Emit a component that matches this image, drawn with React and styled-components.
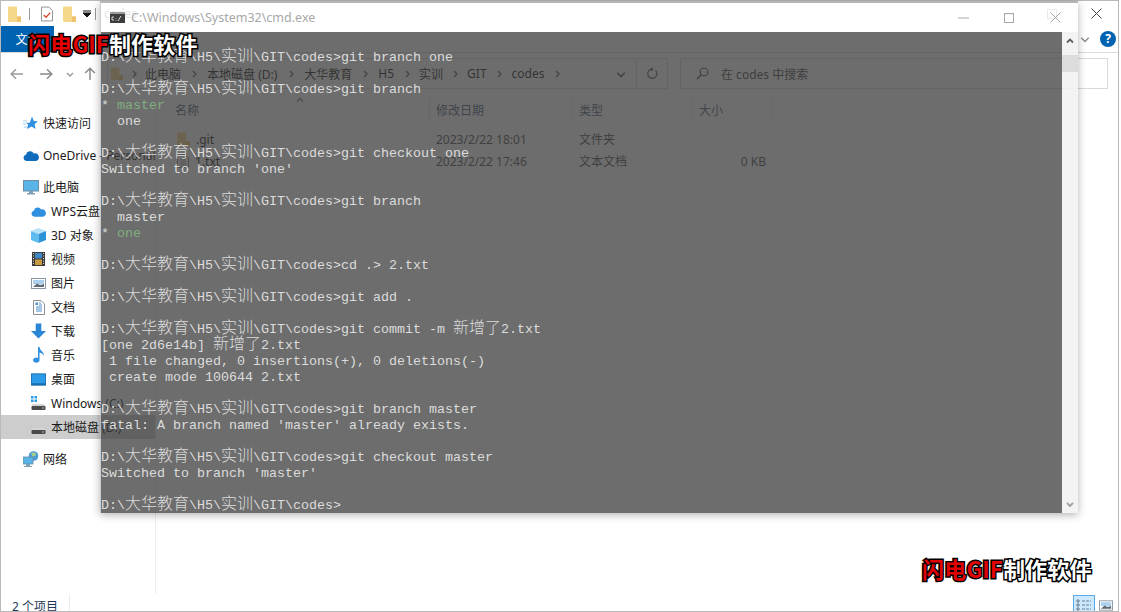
import React from 'react';
import styled, { createGlobalStyle } from 'styled-components';

const GlobalStyle = createGlobalStyle`
  html, body {
    margin: 0;
    padding: 0;
    background: #fff;
    overflow: hidden;
  }
`;

const uiFont = `"Noto Sans", "Noto Sans CJK SC", sans-serif`;

const Desktop = styled.div`
  position: relative;
  width: 1121px;
  height: 612px;
  overflow: hidden;
  background: #fff;
  font-family: ${uiFont};
  font-size: 12px;
  color: #1a1a1a;
`;

const Explorer = styled.div`
  box-sizing: border-box;
  width: 1119px;
  height: 612px;
  display: flex;
  flex-direction: column;
  border: 1px solid #b9b9b9;
`;

const QuickBar = styled.div`
  height: 25px;
  flex: none;
  display: flex;
  align-items: center;
  padding-left: 7px;
`;

const QuickSlot = styled.span`
  width: ${p => p.$w}px;
  height: 18px;
  flex: none;
  display: flex;
  align-items: center;
  justify-content: ${p => p.$align || 'flex-start'};
`;

const QuickDivider = styled.span`
  width: 1px;
  height: 12px;
  background: #999;
`;

const WindowTitle = styled.span`
  margin-left: 8px;
  font-size: 12px;
`;

const Captions = styled.div`
  margin-left: auto;
  display: flex;
  align-self: stretch;
`;

const CaptionButton = styled.div`
  width: ${p => p.$w || 44}px;
  display: flex;
  align-items: center;
  justify-content: center;
`;

const RibbonTabs = styled.div`
  height: 27px;
  flex: none;
  box-sizing: border-box;
  display: flex;
  align-items: center;
  border-bottom: 1px solid #dadada;
`;

const FileTab = styled.div`
  width: 53px;
  height: 26px;
  background: #0063b1;
  color: #fff;
  display: flex;
  align-items: center;
  justify-content: center;
  font-size: 12px;
`;

const RibbonRight = styled.div`
  margin-left: auto;
  display: flex;
  align-items: center;
  gap: 10px;
  padding-right: 2px;
`;

const HelpBadge = styled.span`
  width: 16px;
  height: 16px;
  border-radius: 50%;
  background: #0063b1;
  color: #fff;
  font-weight: 700;
  font-size: 12px;
  line-height: 16px;
  text-align: center;
`;

const NavRow = styled.div`
  height: 44px;
  flex: none;
  display: flex;
  align-items: flex-start;
  padding-top: 5px;
  box-sizing: border-box;
`;

const NavButtons = styled.div`
  width: 106px;
  height: 31px;
  flex: none;
  display: flex;
  align-items: center;
  padding-left: 2px;
  box-sizing: border-box;
`;

const NavGlyph = styled.span`
  width: ${p => p.$w}px;
  flex: none;
  display: flex;
  justify-content: center;
`;

const AddressBox = styled.div`
  width: 561px;
  height: 31px;
  flex: none;
  box-sizing: border-box;
  display: flex;
  align-items: center;
  border: 1px solid #d9d9d9;
  padding-left: 3px;
`;

const Crumb = styled.span`
  white-space: nowrap;
  font-size: 12px;
`;

const CrumbArrow = styled.span`
  width: ${p => p.$w || 26}px;
  display: flex;
  justify-content: center;
`;

const AddressEnd = styled.div`
  margin-left: auto;
  display: flex;
  align-items: center;
  height: 100%;
`;

const DropSlot = styled.div`
  width: 30px;
  display: flex;
  justify-content: center;
`;

const RefreshSlot = styled.div`
  width: 30px;
  height: 100%;
  border-left: 1px solid #d9d9d9;
  display: flex;
  align-items: center;
  justify-content: center;
`;

const SearchBox = styled.div`
  width: 428px;
  height: 31px;
  margin-left: 12px;
  box-sizing: border-box;
  border: 1px solid #d9d9d9;
  display: flex;
  align-items: center;
  padding-left: 15px;
  gap: 12px;
  color: #444;
`;

const Main = styled.div`
  flex: 1;
  min-height: 0;
  display: flex;
`;

const Sidebar = styled.nav`
  width: 154px;
  flex: none;
  padding-top: 14px;
  border-right: 1px solid #ededed;
  margin-right: 1px;
`;

const NavGroup = styled.div`
  margin-bottom: 8px;
`;

const NavItem = styled.div`
  height: 24px;
  display: flex;
  align-items: center;
  gap: ${p => (p.$child ? 5 : 4)}px;
  padding-left: ${p => (p.$child ? 30 : 21)}px;
  white-space: nowrap;
  background: ${p => (p.$selected ? '#cdcdcd' : 'transparent')};
`;

const NavIcon = styled.span`
  width: ${p => (p.$child ? 15 : 17)}px;
  flex: none;
  display: flex;
  justify-content: center;
`;

const ListPane = styled.div`
  flex: 1;
  min-width: 0;
`;

const ListGrid = styled.div`
  display: grid;
  grid-template-columns: 273px 143px 120px 80px;
`;

const HeaderCell = styled.div`
  height: 26px;
  box-sizing: border-box;
  display: flex;
  align-items: center;
  padding-left: ${p => p.$pad || 6}px;
  border-right: 1px solid #e5e5e5;
  color: #4c607a;
  position: relative;
`;

const SortArrow = styled.span`
  position: absolute;
  left: 139px;
  top: -1px;
  display: flex;
`;

const FileRows = styled.div`
  margin-top: 5px;
`;

const FileCell = styled.div`
  height: 22px;
  display: flex;
  align-items: center;
  padding-left: ${p => p.$pad || 6}px;
  justify-content: ${p => (p.$right ? 'flex-end' : 'flex-start')};
  padding-right: ${p => (p.$right ? 7 : 0)}px;
  gap: 6px;
  color: ${p => (p.$muted ? '#4a4a4a' : '#1a1a1a')};
`;

const StatusBar = styled.div`
  height: 17px;
  flex: none;
  display: flex;
  align-items: flex-start;
  line-height: 25px;
  padding-left: 11px;
  overflow: hidden;
`;

const StatusCount = styled.span`
  width: 57px;
  border-right: 1px solid #ededed;
  color: #1f3a5a;
`;

const ViewButtons = styled.div`
  margin-left: auto;
  margin-right: 5px;
  display: flex;
  align-items: flex-start;
  gap: 3px;
`;

const ViewButton = styled.span`
  width: ${p => (p.$active ? 22 : 15)}px;
  height: 17px;
  box-sizing: border-box;
  margin-top: 1px;
  display: flex;
  justify-content: center;
  padding-top: ${p => (p.$active ? 3 : 5)}px;
  border: ${p => (p.$active ? '1px solid #5aa9e6' : 'none')};
  border-bottom: none;
  background: ${p => (p.$active ? '#cce8ff' : 'transparent')};
`;

/* the cmd window floats over the explorer window, half see-through */
const CmdWindow = styled.div`
  position: absolute;
  left: 100px;
  top: 1px;
  width: 978px;
  height: 512px;
  box-sizing: border-box;
  display: flex;
  flex-direction: column;
  border-top: 2px solid rgba(170, 170, 170, 0.85);
  border-left: 1px solid rgba(170, 170, 170, 0.6);
  box-shadow: 0 2px 8px rgba(0, 0, 0, 0.3);
`;

const CmdTitleBar = styled.div`
  height: 29px;
  flex: none;
  display: flex;
  align-items: center;
  padding-left: 9px;
  background: rgba(255, 255, 255, 0.88);
  color: #a8a8a8;
  font-size: 12.5px;
`;

const CmdTitle = styled.span`
  margin-left: 6px;
`;

const CmdBody = styled.div`
  flex: 1;
  min-height: 0;
  display: flex;
`;

const Console = styled.div`
  flex: 1;
  min-width: 0;
  padding-top: 18px;
  box-sizing: border-box;
  overflow: hidden;
  background: rgba(60, 60, 60, 0.75);
  color: #dcdcdc;
  font-family: "Liberation Mono", monospace;
  font-size: 13.333px;
`;

const ConsoleLine = styled.div`
  height: 16px;
  line-height: 16px;
  white-space: pre;
`;

const Cjk = styled.span`
  font-family: "Noto Sans CJK SC", sans-serif;
  font-size: 16px;
  font-weight: 300;
  line-height: 0;
`;

const Green = styled.span`
  color: #7fae7f;
`;

const ScrollBar = styled.div`
  width: 16px;
  flex: none;
  display: flex;
  flex-direction: column;
  background: rgba(241, 241, 241, 0.88);
`;

const ScrollArrow = styled.div`
  height: 18px;
  margin-top: ${p => (p.$end ? 'auto' : '0')};
  display: flex;
  align-items: center;
  justify-content: center;
`;

const ScrollThumb = styled.div`
  height: 17px;
  margin-top: 5px;
  background: #dcdcdc;
`;

const Watermark = styled.div`
  position: absolute;
  left: ${p => p.$x}px;
  top: ${p => p.$y}px;
  font-family: "Noto Sans CJK SC", sans-serif;
  font-weight: 700;
  font-size: 22px;
  line-height: 26px;
  letter-spacing: 0.2px;
  white-space: nowrap;
  color: #fff;
  -webkit-text-stroke: 3px #000;
  paint-order: stroke fill;
`;

const WatermarkRed = styled.span`
  color: #e30000;
`;

const Folder = ({ w = 13, h = 14, c = '#f6d88a' }) => (
  <svg width={w} height={h} viewBox="0 0 13 14" preserveAspectRatio="none">
    <path d="M0 1.5 A1 1 0 0 1 1 .5 H9 V14 H1 A1 1 0 0 1 0 13 Z" fill={c} />
    <path d="M9 9 H13 V14 H9 Z" fill="#eec26a" />
  </svg>
);

const DocCheck = () => (
  <svg width="12" height="16" viewBox="0 0 13 16">
    <path d="M.5 .5 H8.5 L12.5 4.5 V15.5 H.5 Z" fill="#fff" stroke="#8a8a8a" />
    <path d="M3 9 L5.5 11.5 L10 6.5" fill="none" stroke="#d8452b" strokeWidth="1.4" />
  </svg>
);

const Chevron = ({ dir = 'right', c = '#777', size = 8, sw = 1.4 }) => {
  const d = {
    right: 'M3 1 L6 4 L3 7',
    down: 'M1 3 L4 6 L7 3',
    up: 'M1 5.5 L4 2.5 L7 5.5',
  }[dir];
  return (
    <svg width={size} height={size} viewBox="0 0 8 8">
      <path d={d} fill="none" stroke={c} strokeWidth={sw} />
    </svg>
  );
};

const ArrowLeft = ({ c }) => (
  <svg width="14" height="12" viewBox="0 0 14 12">
    <path d="M13 6 H1.5 M6 1.2 L1.2 6 L6 10.8" fill="none" stroke={c} strokeWidth="1.5" />
  </svg>
);

const ArrowRight = ({ c }) => (
  <svg width="14" height="12" viewBox="0 0 14 12">
    <path d="M1 6 H12.5 M8 1.2 L12.8 6 L8 10.8" fill="none" stroke={c} strokeWidth="1.5" />
  </svg>
);

const ArrowUp = ({ c }) => (
  <svg width="12" height="14" viewBox="0 0 12 14">
    <path d="M6 13 V1.5 M1.2 6 L6 1.2 L10.8 6" fill="none" stroke={c} strokeWidth="1.5" />
  </svg>
);

const Refresh = () => (
  <svg width="12" height="13" viewBox="0 0 12 13">
    <path d="M9.5 3.4 A4.6 4.6 0 1 1 5.5 2.2" fill="none" stroke="#555" strokeWidth="1.2" />
    <path d="M5 .2 L7.6 2.3 L5 4.2 Z" fill="#555" />
  </svg>
);

const SearchGlass = () => (
  <svg width="13" height="13" viewBox="0 0 13 13">
    <circle cx="8" cy="5" r="3.8" fill="none" stroke="#444" strokeWidth="1.1" />
    <path d="M5.2 7.8 L1 12" stroke="#444" strokeWidth="1.3" />
  </svg>
);

const Star = () => (
  <svg width="15" height="14" viewBox="0 0 15 14">
    <path d="M9 .5 L10.8 5 L14.8 5.3 L11.6 8.2 L12.6 13 L8.6 10.5 L4 13 L5.2 8.5 L3 6.8 H6.8 Z" fill="#2f8fe0" />
    <path d="M0 5 H4 M0 8 H3 M1 11 H4" stroke="#9cc9ee" strokeWidth="1" />
  </svg>
);

const Cloud = ({ c = '#0f6cbd', w = 16 }) => (
  <svg width={w} height="11" viewBox="0 0 16 11">
    <path d="M3.4 11 A3.2 3.2 0 0 1 3 4.7 A4.2 4.2 0 0 1 10.8 3.4 A3.6 3.6 0 0 1 13 11 Z" fill={c} />
  </svg>
);

const Monitor = () => (
  <svg width="16" height="15" viewBox="0 0 16 15">
    <rect x=".5" y=".5" width="15" height="10.5" fill="#59b4e8" stroke="#6d8ca3" />
    <path d="M6 11 H10 V13 H12 V14.5 H4 V13 H6 Z" fill="#7f9fb5" />
  </svg>
);

const Cube = () => (
  <svg width="15" height="15" viewBox="0 0 15 15">
    <path d="M7.5 0 L15 3 L7.5 6 L0 3 Z" fill="#b7e2fa" />
    <path d="M0 3 L7.5 6 V15 L0 12 Z" fill="#5fbcef" />
    <path d="M15 3 L7.5 6 V15 L15 12 Z" fill="#2b93d8" />
  </svg>
);

const Film = () => (
  <svg width="13" height="14" viewBox="0 0 13 14">
    <rect width="13" height="14" fill="#3a3a3a" />
    <rect x="3" y="1" width="7" height="5.5" fill="#3f86c4" />
    <rect x="3" y="7.5" width="7" height="5.5" fill="#c79a3d" />
    <path d="M1 1.5 H2 M1 4 H2 M1 6.5 H2 M1 9 H2 M1 11.5 H2 M11 1.5 H12 M11 4 H12 M11 6.5 H12 M11 9 H12 M11 11.5 H12" stroke="#ddd" />
  </svg>
);

const Picture = ({ w = 15, h = 11 }) => (
  <svg width={w} height={h} viewBox="0 0 15 11">
    <rect x=".5" y=".5" width="14" height="10" fill="#fff" stroke="#8b98a3" />
    <rect x="2" y="2" width="11" height="4" fill="#a9d0ee" />
    <path d="M2 9 L6 5.5 L9 7 L13 6 V9 Z" fill="#5e6b76" />
  </svg>
);

const DocLines = () => (
  <svg width="12" height="15" viewBox="0 0 12 15">
    <path d="M.5 .5 H8 L11.5 4 V14.5 H.5 Z" fill="#fff" stroke="#8f8f8f" />
    <path d="M6 3 H8 M6 5 H9 M3 7 H9 M3 9 H9 M3 11 H9" stroke="#4f8fc8" />
    <rect x="2.5" y="2.5" width="2.5" height="2.5" fill="#4f8fc8" />
  </svg>
);

const Download = () => (
  <svg width="16" height="16" viewBox="0 0 16 16">
    <path d="M5 0 H11 V8 H16 L8 16 L0 8 H5 Z" fill="#2c86d6" />
  </svg>
);

const Music = () => (
  <svg width="12" height="16" viewBox="0 0 12 16">
    <path d="M5 0 H6.5 C7 4 11.5 4.5 10.5 9 C10 6.5 8 6 6.5 5.5 V13 A3.2 2.6 0 1 1 5 11 Z" fill="#2f8fe0" />
  </svg>
);

const DesktopIcon = () => (
  <svg width="16" height="13" viewBox="0 0 16 13">
    <rect x=".5" y=".5" width="15" height="12" fill="#2b9be8" stroke="#1a6fae" />
    <rect x="1" y="10.5" width="14" height="2" fill="#1a6fae" />
  </svg>
);

const Drive = ({ win }) => (
  <svg width="15" height="14" viewBox="0 0 15 14">
    {win && <path d="M0 0 H2.5 V2.5 H0 Z M3.5 0 H6 V2.5 H3.5 Z M0 3.5 H2.5 V6 H0 Z M3.5 3.5 H6 V6 H3.5 Z" fill="#2b9be8" />}
    <path d="M2 8 H13 L14.5 10 H.5 Z" fill="#d5d5d5" />
    <rect x=".5" y="10" width="14" height="4" rx="1" fill="#4a4a4a" />
    <rect x="11" y="11.5" width="2" height="1" fill="#bbb" />
  </svg>
);

const Globe = () => (
  <svg width="16" height="16" viewBox="0 0 16 16">
    <circle cx="10.5" cy="5" r="4.8" fill="#4a9bd8" />
    <path d="M8 2 L12 1.5 L13 4 L10 6 Z" fill="#a9cf7f" />
    <rect x="0" y="6" width="10" height="7" fill="#59b4e8" stroke="#6d8ca3" strokeWidth=".8" />
    <path d="M3 13 H7 V15 H9 V16 H1 V15 H3 Z" fill="#7f9fb5" />
  </svg>
);

const TxtIcon = () => (
  <svg width="12" height="14" viewBox="0 0 12 14">
    <path d="M.5 .5 H8 L11.5 4 V13.5 H.5 Z" fill="#fff" stroke="#8f8f8f" />
    <path d="M3 5 H9 M3 7 H9 M3 9 H9 M3 11 H9" stroke="#9a9a9a" />
  </svg>
);

const CaptionMin = ({ c }) => (
  <svg width="11" height="2" viewBox="0 0 11 2"><path d="M0 1 H11" stroke={c} /></svg>
);

const CaptionMax = ({ c }) => (
  <svg width="10" height="10" viewBox="0 0 10 10"><rect x=".5" y=".5" width="9" height="9" fill="none" stroke={c} /></svg>
);

const CaptionClose = ({ c }) => (
  <svg width="11" height="11" viewBox="0 0 11 11"><path d="M.5 .5 L10.5 10.5 M10.5 .5 L.5 10.5" stroke={c} /></svg>
);

const ListViewIcon = () => (
  <svg width="16" height="13" viewBox="0 0 16 13">
    <path d="M1 1 H3 V3 H1 Z M1 5 H3 V7 H1 Z M1 9 H3 V11 H1 Z" fill="none" stroke="#6b7f8f" />
    <path d="M6 2 H15 M6 6 H15 M6 10 H15" stroke="#6b7f8f" strokeDasharray="3 1" />
  </svg>
);

const navGroups = [
  [{ label: '快速访问', icon: <Star /> }],
  [{ label: 'OneDrive - Personal', icon: <Cloud /> }],
  [
    { label: '此电脑', icon: <Monitor /> },
    { label: 'WPS云盘', icon: <Cloud c="#2f8fe0" w={15} />, child: true },
    { label: '3D 对象', icon: <Cube />, child: true },
    { label: '视频', icon: <Film />, child: true },
    { label: '图片', icon: <Picture />, child: true },
    { label: '文档', icon: <DocLines />, child: true },
    { label: '下载', icon: <Download />, child: true },
    { label: '音乐', icon: <Music />, child: true },
    { label: '桌面', icon: <DesktopIcon />, child: true },
    { label: 'Windows (C:)', icon: <Drive win />, child: true },
    { label: '本地磁盘 (D:)', icon: <Drive />, child: true, selected: true },
  ],
  [{ label: '网络', icon: <Globe /> }],
];

const crumbs = [
  ['此电脑', 26],
  ['本地磁盘 (D:)', 27],
  ['大华教育', 26],
  ['H5', 25],
  ['实训', 24],
  ['GIT', 25],
  ['codes', 24],
];

const prompt = 'D:\\大华教育\\H5\\实训\\GIT\\codes>';

const consoleLines = [
  prompt + 'git branch one',
  '',
  prompt + 'git branch',
  { star: 'master' },
  '  one',
  '',
  prompt + 'git checkout one',
  "Switched to branch 'one'",
  '',
  prompt + 'git branch',
  '  master',
  { star: 'one' },
  '',
  prompt + 'cd .> 2.txt',
  '',
  prompt + 'git add .',
  '',
  prompt + 'git commit -m 新增了2.txt',
  '[one 2d6e14b] 新增了2.txt',
  ' 1 file changed, 0 insertions(+), 0 deletions(-)',
  ' create mode 100644 2.txt',
  '',
  prompt + 'git branch master',
  "fatal: A branch named 'master' already exists.",
  '',
  prompt + 'git checkout master',
  "Switched to branch 'master'",
  '',
  prompt,
];

// chinese runs need a 16px glyph so they take two console cells
function renderConsoleText(text) {
  return text.split(/([\u4e00-\u9fff]+)/).map((part, i) =>
    i % 2 ? <Cjk key={i}>{part}</Cjk> : part
  );
}

function WatermarkLabel({ x, y }) {
  return (
    <Watermark $x={x} $y={y}>
      <WatermarkRed>闪电GIF</WatermarkRed>制作软件
    </Watermark>
  );
}

function CmdOverlay() {
  return (
    <CmdWindow>
      <CmdTitleBar>
        <svg width="15" height="11" viewBox="0 0 15 11">
          <rect width="15" height="11" fill="#3d3d3d" />
          <rect y="0" width="15" height="2" fill="#9a9a9a" />
          <path d="M2 5 H4 M2 8 H4 M2 5 V8 M6 6 V6.6 M6 8 V8.6 M8 9 L11 4" stroke="#fff" strokeWidth=".8" />
        </svg>
        <CmdTitle>C:\Windows\System32\cmd.exe</CmdTitle>
        <Captions>
          <CaptionButton $w={46}><CaptionMin c="#a8a8a8" /></CaptionButton>
          <CaptionButton $w={46}><CaptionMax c="#a8a8a8" /></CaptionButton>
          <CaptionButton $w={46}><CaptionClose c="#a8a8a8" /></CaptionButton>
        </Captions>
      </CmdTitleBar>
      <CmdBody>
        <Console>
          {consoleLines.map((line, i) =>
            typeof line === 'string' ? (
              <ConsoleLine key={i}>{renderConsoleText(line)}</ConsoleLine>
            ) : (
              <ConsoleLine key={i}>* <Green>{line.star}</Green></ConsoleLine>
            )
          )}
        </Console>
        <ScrollBar>
          <ScrollArrow><Chevron dir="up" c="#606060" sw={1.8} /></ScrollArrow>
          <ScrollThumb />
          <ScrollArrow $end><Chevron dir="down" c="#a0a0a0" sw={1.8} /></ScrollArrow>
        </ScrollBar>
      </CmdBody>
    </CmdWindow>
  );
}

function ExplorerWindow() {
  return (
    <Explorer>
      <QuickBar>
        <QuickSlot $w={21}><Folder h={16} /></QuickSlot>
        <QuickSlot $w={12}><QuickDivider /></QuickSlot>
        <QuickSlot $w={22}><DocCheck /></QuickSlot>
        <QuickSlot $w={20}><Folder h={16} /></QuickSlot>
        <QuickSlot $w={12}>
          <svg width="8" height="8" viewBox="0 0 8 8">
            <path d="M0 1 H8 M0 3 H8 L4 7 L0 3" stroke="#111" fill="#111" />
          </svg>
        </QuickSlot>
        <QuickDivider />
        <WindowTitle>codes</WindowTitle>
        <Captions>
          <CaptionButton><CaptionMin c="#555" /></CaptionButton>
          <CaptionButton><CaptionMax c="#555" /></CaptionButton>
          <CaptionButton><CaptionClose c="#444" /></CaptionButton>
        </Captions>
      </QuickBar>
      <RibbonTabs>
        <FileTab>文件</FileTab>
        <RibbonRight>
          <Chevron dir="down" c="#888" size={10} sw={1} />
          <HelpBadge>?</HelpBadge>
        </RibbonRight>
      </RibbonTabs>
      <NavRow>
        <NavButtons>
          <NavGlyph $w={28}><ArrowLeft c="#9a9a9a" /></NavGlyph>
          <NavGlyph $w={30}><ArrowRight c="#8a8a8a" /></NavGlyph>
          <NavGlyph $w={18}><Chevron dir="down" c="#9a9a9a" /></NavGlyph>
          <NavGlyph $w={22}><ArrowUp c="#8a8a8a" /></NavGlyph>
        </NavButtons>
        <AddressBox>
          <Folder w={12} h={13} />
          <CrumbArrow $w={22}><Chevron c="#666" /></CrumbArrow>
          {crumbs.map(([name, w]) => (
            <React.Fragment key={name}>
              <Crumb>{name}</Crumb>
              <CrumbArrow $w={w}><Chevron c="#666" /></CrumbArrow>
            </React.Fragment>
          ))}
          <AddressEnd>
            <DropSlot><Chevron dir="down" c="#555" size={10} sw={1.3} /></DropSlot>
            <RefreshSlot><Refresh /></RefreshSlot>
          </AddressEnd>
        </AddressBox>
        <SearchBox>
          <SearchGlass />
          <span>在 codes 中搜索</span>
        </SearchBox>
      </NavRow>
      <Main>
        <Sidebar>
          {navGroups.map((group, g) => (
            <NavGroup key={g}>
              {group.map(item => (
                <NavItem key={item.label} $child={item.child} $selected={item.selected}>
                  <NavIcon $child={item.child}>{item.icon}</NavIcon>
                  {item.label}
                </NavItem>
              ))}
            </NavGroup>
          ))}
        </Sidebar>
        <ListPane>
          <ListGrid>
            <HeaderCell $pad={18}>
              名称
              <SortArrow><Chevron dir="up" c="#888" /></SortArrow>
            </HeaderCell>
            <HeaderCell>修改日期</HeaderCell>
            <HeaderCell>类型</HeaderCell>
            <HeaderCell>大小</HeaderCell>
          </ListGrid>
          <FileRows>
            <ListGrid>
              <FileCell $pad={20}><Folder />.git</FileCell>
              <FileCell $muted>2023/2/22 18:01</FileCell>
              <FileCell $muted>文件夹</FileCell>
              <FileCell />
              <FileCell $pad={20}><TxtIcon />1.txt</FileCell>
              <FileCell $muted>2023/2/22 17:46</FileCell>
              <FileCell $muted>文本文档</FileCell>
              <FileCell $muted $right>0 KB</FileCell>
            </ListGrid>
          </FileRows>
        </ListPane>
      </Main>
      <StatusBar>
        <StatusCount>2 个项目</StatusCount>
        <ViewButtons>
          <ViewButton $active><ListViewIcon /></ViewButton>
          <ViewButton><Picture w={14} h={11} /></ViewButton>
        </ViewButtons>
      </StatusBar>
    </Explorer>
  );
}

export default function App() {
  return (
    <Desktop>
      <GlobalStyle />
      <ExplorerWindow />
      <CmdOverlay />
      <WatermarkLabel x={28} y={30} />
      <WatermarkLabel x={922} y={555} />
    </Desktop>
  );
}
